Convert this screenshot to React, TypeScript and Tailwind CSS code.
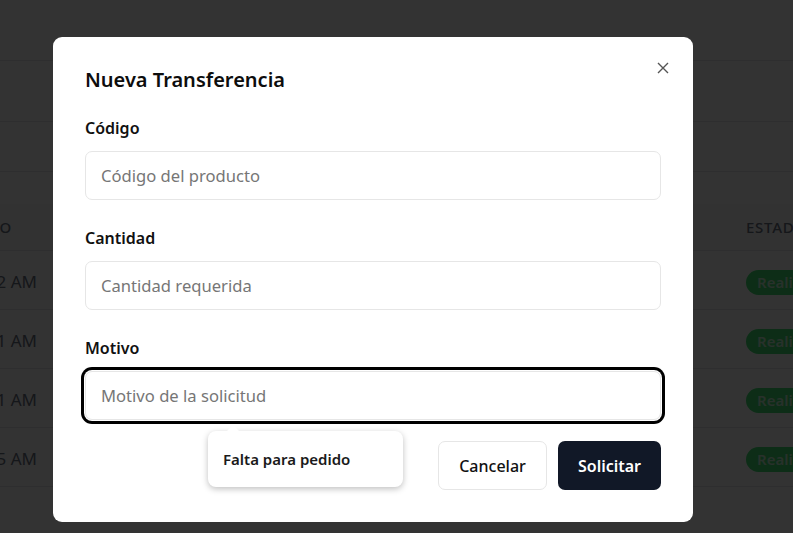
import React from 'react';

const rows = ['10:32 AM', '10:21 AM', '09:51 AM', '09:15 AM'];

const Field: React.FC<{ label: string; placeholder: string; focused?: boolean; className?: string }> = ({
  label,
  placeholder,
  focused,
  className,
}) => (
  <div className={className}>
    <label className="block text-[16px] leading-6 font-semibold text-[#111]">{label}</label>
    <div
      className={
        'mt-[11px] h-[49px] rounded-[7px] border border-[#e6e6e6] bg-white flex items-center px-[15px] pt-[1px] ' +
        (focused ? 'shadow-[0_0_0_1px_#fff,0_0_0_4px_#000] rounded-[6px]' : '')
      }
    >
      <span className="text-[16.6px] text-[#767676]">{placeholder}</span>
    </div>
  </div>
);

export default function App() {
  return (
    <div className="relative w-[793px] h-[533px] overflow-hidden bg-white font-['Noto_Sans',sans-serif]">
      {/* page behind the dialog */}
      <div className="h-[61px] border-b border-gray-200" />
      <div className="h-[61px] border-b border-gray-200" />
      <div className="h-[50px] border-b border-gray-200" />
      <div className="h-[32px]" />
      <div className="h-[47px] bg-gray-50 flex items-center border-b border-gray-200">
        <div className="w-[12px] shrink-0 overflow-hidden flex justify-end whitespace-nowrap text-[15px] tracking-wider font-medium text-gray-500">
          CREADO
        </div>
        <div className="ml-[734px] shrink-0 whitespace-nowrap text-[15px] tracking-wider font-medium text-gray-500">
          ESTADO
        </div>
      </div>
      {rows.map((r) => (
        <div key={r} className="h-[59px] pt-[4px] flex items-center border-b border-gray-200">
          <div className="w-[37px] shrink-0 overflow-hidden flex justify-end whitespace-nowrap text-[17px] text-gray-500">
            {r}
          </div>
          <div className="ml-[709px] shrink-0 h-[25px] px-[11px] rounded-full bg-[#41e173] text-[#c8f5d6] text-[15px] font-semibold flex items-center">
            Realizado
          </div>
        </div>
      ))}

      {/* overlay */}
      <div className="absolute inset-0 bg-black/80 pl-[53px] pt-[37px]">
        <div className="relative w-[640px] rounded-[9px] bg-white p-8">
          <button className="absolute right-[24px] top-[25px] w-[12px] h-[12px] text-[#555]">
            <svg viewBox="0 0 12 12" width="12" height="12" fill="none" stroke="currentColor" strokeWidth="1.4">
              <path d="M1 1 11 11M11 1 1 11" />
            </svg>
          </button>
          <h2 className="text-[20px] leading-[22px] font-semibold text-[#0d0d0d]">Nueva Transferencia</h2>
          <div className="mt-[25px]">
            <Field label="Código" placeholder="Código del producto" />
            <Field className="mt-[26px]" label="Cantidad" placeholder="Cantidad requerida" />
            <Field className="mt-[26px]" label="Motivo" placeholder="Motivo de la solicitud" focused />
          </div>
          <div className="mt-[21px] flex justify-end gap-[11px]">
            <button className="h-[49px] w-[109px] rounded-[7px] border border-[#e6e6e6] bg-white text-[16px] font-medium text-[#111]">
              Cancelar
            </button>
            <button className="h-[49px] w-[103px] rounded-[7px] bg-[#111827] text-[16px] font-semibold text-white">
              Solicitar
            </button>
          </div>

          {/* suggestion popup */}
          <div className="absolute left-[155px] top-[394px] w-[195px] h-[56px] rounded-[8px] bg-white shadow-[0_2px_6px_rgba(0,0,0,0.25)] flex items-center pl-[15px]">
            <div className="absolute -top-[6px] left-[19px] w-0 h-0 border-l-[6px] border-r-[6px] border-b-[6px] border-l-transparent border-r-transparent border-b-white" />
            <span className="text-[15px] font-semibold text-[#1a1a1a]">Falta para pedido</span>
          </div>
        </div>
      </div>
    </div>
  );
}
